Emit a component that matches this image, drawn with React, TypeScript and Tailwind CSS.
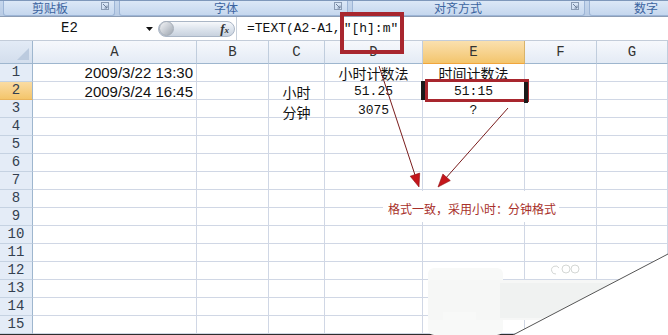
import React from "react";

type Font = "sans" | "mono" | "cjk";
type Cell = { text: string; font: Font; align: "right" | "center"; dy: string };

const COLS = ["A", "B", "C", "D", "E", "F", "G"];

const DATA: Record<string, Cell> = {
  "1-A": { text: "2009/3/22 13:30", font: "sans", align: "right", dy: "" },
  "2-A": { text: "2009/3/24 16:45", font: "sans", align: "right", dy: "translate-y-[1px]" },
  "1-D": { text: "小时计数法", font: "cjk", align: "center", dy: "" },
  "1-E": { text: "时间计数法", font: "cjk", align: "center", dy: "" },
  "2-C": { text: "小时", font: "cjk", align: "center", dy: "translate-y-[0.5px]" },
  "3-C": { text: "分钟", font: "cjk", align: "center", dy: "translate-y-[3px]" },
  "2-D": { text: "51.25", font: "mono", align: "center", dy: "translate-y-[1px]" },
  "3-D": { text: "3075", font: "mono", align: "center", dy: "translate-y-[2px]" },
  "2-E": { text: "51:15", font: "mono", align: "center", dy: "translate-y-[1px]" },
  "3-E": { text: "?", font: "mono", align: "center", dy: "translate-y-[2px]" },
};

const fontClass: Record<Font, string> = {
  sans: "font-['Liberation_Sans',Arial,sans-serif] text-[15px] text-[#111]",
  mono: "font-['Liberation_Mono',monospace] text-[13px] text-[#111]",
  cjk: "font-['Noto_Sans_CJK_SC',sans-serif] text-[14px] text-[#111]",
};

function Launcher() {
  return (
    <svg width="8" height="8" viewBox="0 0 8 8" className="absolute right-[5px] top-[1px]">
      <rect x="0.5" y="0.5" width="7" height="7" fill="none" stroke="#8a9bb3" strokeWidth="1" />
      <path d="M2 2 L6 6 M6 3.5 L6 6 L3.5 6" stroke="#6d7f99" strokeWidth="1" fill="none" />
    </svg>
  );
}

function Ribbon() {
  const tab =
    "relative h-[15px] shrink-0 rounded-b-[3px] border border-t-0 border-[#9db5d6] bg-gradient-to-b from-[#dce8f7] to-[#c5d7ee] flex justify-center";
  const label =
    "leading-[13px] text-[12px] text-[#3b64a0] font-['Noto_Sans_CJK_SC',sans-serif]";
  return (
    <div className="h-[17px] border-t border-[#7f98bb] border-b border-b-[#8c9db5] bg-gradient-to-b from-[#c6d7ed] to-[#b8cbe4] flex gap-[4px] pl-[3px] overflow-hidden">
      <div className={`${tab} w-[112px] pr-[18px]`}>
        <span className={label}>剪贴板</span>
        <Launcher />
      </div>
      <div className={`${tab} w-[229px] pr-[15px]`}>
        <span className={label}>字体</span>
        <Launcher />
      </div>
      <div className={`${tab} w-[233px] pr-[21px]`}>
        <span className={label}>对齐方式</span>
        <Launcher />
      </div>
      <div className={`${tab} w-[90px] justify-start pl-[44px]`}>
        <span className={label}>数字</span>
      </div>
    </div>
  );
}

function FormulaBar() {
  return (
    <div className="flex h-[24px] items-center border-b border-[#c3ccd9] bg-white">
      <div className="flex h-full w-[153px] items-center">
        <span className="w-[140px] text-center font-['Liberation_Mono',monospace] text-[14px] text-[#111]">E2</span>
        <svg width="7" height="4" viewBox="0 0 7 4" className="ml-[7px]">
          <path d="M0 0 L7 0 L3.5 4 Z" fill="#111" />
        </svg>
      </div>
      <div className="ml-[5px] flex h-[16px] w-[77px] items-center justify-between rounded-full border border-[#aab6c6] bg-gradient-to-b from-[#f6f8fb] via-[#dde4ed] to-[#c8d2de] pr-[5px]">
        <div className="h-[15px] w-[15px] rounded-full border border-[#a5adb8] bg-gradient-to-br from-[#f4f5f7] via-[#c9ced5] to-[#9ea6b0]" />
        <span className="font-['Liberation_Serif',serif] text-[13px] italic font-bold text-[#333] leading-none">
          f<span className="text-[9px]">x</span>
        </span>
      </div>
      <div className="ml-[1px] h-full w-[1px] bg-[#c8d0da]" />
      <div className="ml-[10px] flex items-center font-['Liberation_Mono',monospace] text-[13px] text-[#111] whitespace-pre">
        <span>=TEXT(A2-A1,</span>
        <span className="ml-[3px]">"[h]:m"</span>
      </div>
    </div>
  );
}

function Sheet() {
  const rows = Array.from({ length: 15 }, (_, i) => i + 1);
  return (
    <div className="grid grid-cols-[33px_164px_72px_56px_98px_102px_72px_71px] grid-rows-[23px_repeat(15,18px)]">
      <div className="relative border-r border-b border-[#9eb6ce] bg-gradient-to-b from-[#e3ebf6] to-[#d3deed]">
        <svg width="12" height="12" viewBox="0 0 12 12" className="absolute right-[3px] bottom-[3px]">
          <path d="M12 0 L12 12 L0 12 Z" fill="#bccbdf" />
        </svg>
      </div>
      {COLS.map((c) => (
        <div
          key={c}
          className={
            c === "E"
              ? "flex items-center justify-center border-r border-b border-r-[#d8b36a] border-b-[#f0a53c] bg-gradient-to-b from-[#fae0ae] to-[#f3c56c] font-['Liberation_Mono',monospace] text-[14px] text-[#333]"
              : "flex items-center justify-center border-r border-b border-r-[#c0cddd] border-b-[#9eb6ce] bg-gradient-to-b from-[#f6f8fc] to-[#e4ebf5] font-['Liberation_Mono',monospace] text-[14px] text-[#333]"
          }
        >
          {c}
        </div>
      ))}
      {rows.map((r) => (
        <React.Fragment key={r}>
          <div
            className={
              r === 2
                ? "flex items-center justify-center border-r border-b border-r-[#9eb6ce] border-b-[#e9b45c] bg-gradient-to-b from-[#fadca3] to-[#f4c56a] font-['Liberation_Mono',monospace] text-[14px] text-[#333f4f]"
                : "flex items-center justify-center border-r border-b border-r-[#9eb6ce] border-b-[#c5d2e2] bg-[#e4ecf7] font-['Liberation_Mono',monospace] text-[14px] text-[#333f4f]"
            }
          >
            {r}
          </div>
          {COLS.map((c) => {
            const d = DATA[`${r}-${c}`];
            return (
              <div
                key={c}
                className={
                  d && d.align === "right"
                    ? "flex items-center justify-end whitespace-nowrap border-r border-b border-[#d0d7e5] pr-[3px]"
                    : "flex items-center justify-center whitespace-nowrap border-r border-b border-[#d0d7e5]"
                }
              >
                {d ? <span className={`leading-[16px] ${d.dy} ${fontClass[d.font]}`}>{d.text}</span> : null}
              </div>
            );
          })}
        </React.Fragment>
      ))}
    </div>
  );
}

function Overlay() {
  return (
    <svg className="pointer-events-none absolute left-0 top-0" width="668" height="335" viewBox="0 0 668 335">
      {/* watermark */}
      <rect x="428" y="268" width="75" height="67" rx="6" fill="#f8f9f8" />
      <rect x="428" y="280" width="190" height="40" rx="3" fill="#f6f7f6" />
      <rect x="500" y="283" width="112" height="35" fill="#f0f2f1" />
      <rect x="443" y="312" width="33" height="23" fill="#f8f9f8" />
      <g fill="none" stroke="#d4d7d5" strokeWidth="1">
        <path d="M556 274 a4 4 0 1 1 3 -6" />
        <circle cx="566" cy="269" r="4" />
        <circle cx="575" cy="269" r="4" />
      </g>
      {/* bottom right corner */}
      <polygon points="668,254 668,335 513,335" fill="#ffffff" />
      <line x1="668" y1="254" x2="513" y2="335" stroke="#555" strokeWidth="1" />
      {/* arrows */}
      <line x1="379" y1="66" x2="416" y2="178" stroke="#7a1c1c" strokeWidth="1" />
      <polygon points="419,187 410.2,176.2 419.7,173.1" fill="#c4161c" stroke="#8e1014" strokeWidth="0.6" />
      <line x1="508" y1="108" x2="445" y2="179" stroke="#7a1c1c" strokeWidth="1" />
      <polygon points="438,187 442.9,174 450.3,180.6" fill="#c4161c" stroke="#8e1014" strokeWidth="0.6" />
    </svg>
  );
}

export default function App() {
  return (
    <div className="relative h-[335px] w-[668px] overflow-hidden bg-white">
      <Ribbon />
      <FormulaBar />
      <Sheet />
      <div className="h-[1px] bg-[#2e2e2e]" />

      {/* annotation */}
      <div className="absolute left-[383px] top-[191px] h-[31px] w-[176px] bg-white pl-[5px] pt-[12px]">
        <span className="block leading-[12px] whitespace-nowrap font-['Noto_Sans_CJK_SC',sans-serif] text-[12px] text-[#a8302a]">
          格式一致，采用小时：分钟格式
        </span>
      </div>

      {/* E2 selection and red box */}
      <div className="absolute left-[421px] top-[81px] h-[19px] w-[4px] bg-[#1a1a1a]" />
      <div className="absolute left-[425px] top-[79px] h-[23px] w-[104px] border-[3px] border-[#a8262e]" />
      <div className="absolute left-[524px] top-[82px] h-[21px] w-[4px] bg-[#1a1a1a]" />

      {/* formula red box */}
      <div className="absolute left-[340px] top-[12px] h-[42px] w-[64px] border-[4px] border-[#a8262e]" />

      <Overlay />
    </div>
  );
}
